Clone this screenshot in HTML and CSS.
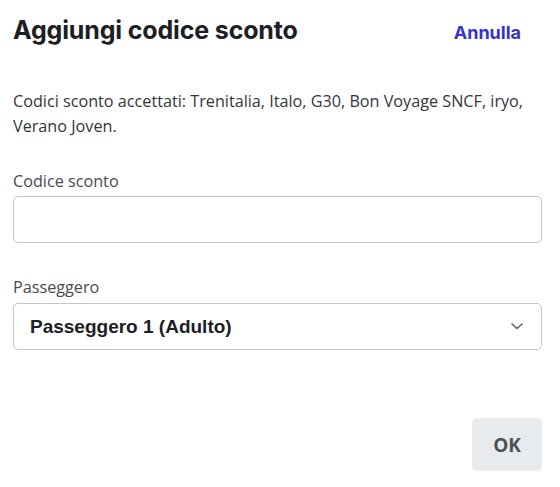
FILE: index.html
```html
<!DOCTYPE html>
<html lang="it">
<head>
<meta charset="utf-8">
<title>Aggiungi codice sconto</title>
<link rel="stylesheet" href="styles.css">
</head>
<body>
<div class="dialog">
  <div class="header">
    <h1 class="title">Aggiungi codice sconto</h1>
    <a class="cancel" href="#">Annulla</a>
  </div>
  <p class="desc">Codici sconto accettati: Trenitalia, Italo, G30, Bon Voyage SNCF, iryo, Verano Joven.</p>
  <div class="field">
    <label class="label" for="code">Codice sconto</label>
    <input class="input" id="code" type="text">
  </div>
  <div class="field field-second">
    <label class="label label-second" for="pax">Passeggero</label>
    <div class="select">
      <span class="select-value">Passeggero 1 (Adulto)</span>
      <svg class="chevron" width="12" height="7" viewBox="0 0 12 7"><path d="M1 1l5 4.5L11 1" fill="none" stroke="#5f6368" stroke-width="1.6" stroke-linecap="round" stroke-linejoin="round"/></svg>
    </div>
  </div>
  <div class="actions">
    <button class="ok" type="button">OK</button>
  </div>
</div>
</body>
</html>
```
FILE: styles.css
```css
html, body {
  margin: 0;
  padding: 0;
  background: #ffffff;
}
.dialog {
  width: 560px;
  box-sizing: border-box;
  padding: 15px 18px 0 13px;
  font-family: "Open Sans", "Noto Sans", sans-serif;
}
.header {
  display: flex;
  justify-content: space-between;
  align-items: baseline;
}
.title {
  margin: 0;
  font-family: Inter, "Liberation Sans", sans-serif;
  font-weight: 700;
  font-size: 25px;
  line-height: 30px;
  color: #1c2024;
  letter-spacing: -0.15px;
}
.cancel {
  margin-right: 21px;
  font-family: Inter, "Liberation Sans", sans-serif;
  font-weight: 700;
  font-size: 18px;
  color: #3532d2;
  text-decoration: none;
}
.desc {
  margin: 44px 0 0 0;
  font-size: 16.2px;
  line-height: 25px;
  color: #333639;
}
.field {
  margin-top: 32px;
  display: flex;
  flex-direction: column;
}
.field-second {
  margin-top: 34px;
}
.label {
  font-size: 16.2px;
  line-height: 20px;
  color: #474b4f;
}
.input {
  margin: 5px 0 0 0;
  height: 47px;
  box-sizing: border-box;
  border: 1px solid #c3c6c9;
  border-radius: 5px;
  padding: 0 16px;
  font: inherit;
  background: #fff;
}
.select {
  margin-top: 6px;
  height: 47px;
  box-sizing: border-box;
  border: 1px solid #c3c6c9;
  border-radius: 5px;
  padding: 0 18px 0 16px;
  display: flex;
  align-items: center;
  justify-content: space-between;
}
.select-value {
  font-family: "Liberation Sans", Arial, sans-serif;
  font-weight: 700;
  font-size: 19px;
  color: #1c2024;
}
.chevron {
  display: block;
}
.actions {
  margin-top: 68px;
  display: flex;
  justify-content: flex-end;
}
.ok {
  width: 70px;
  height: 53px;
  border: none;
  border-radius: 5px;
  background: #e8ebed;
  font-family: "Open Sans", sans-serif;
  font-weight: 700;
  font-size: 19px;
  color: #4b5157;
  padding: 0;
}
```
